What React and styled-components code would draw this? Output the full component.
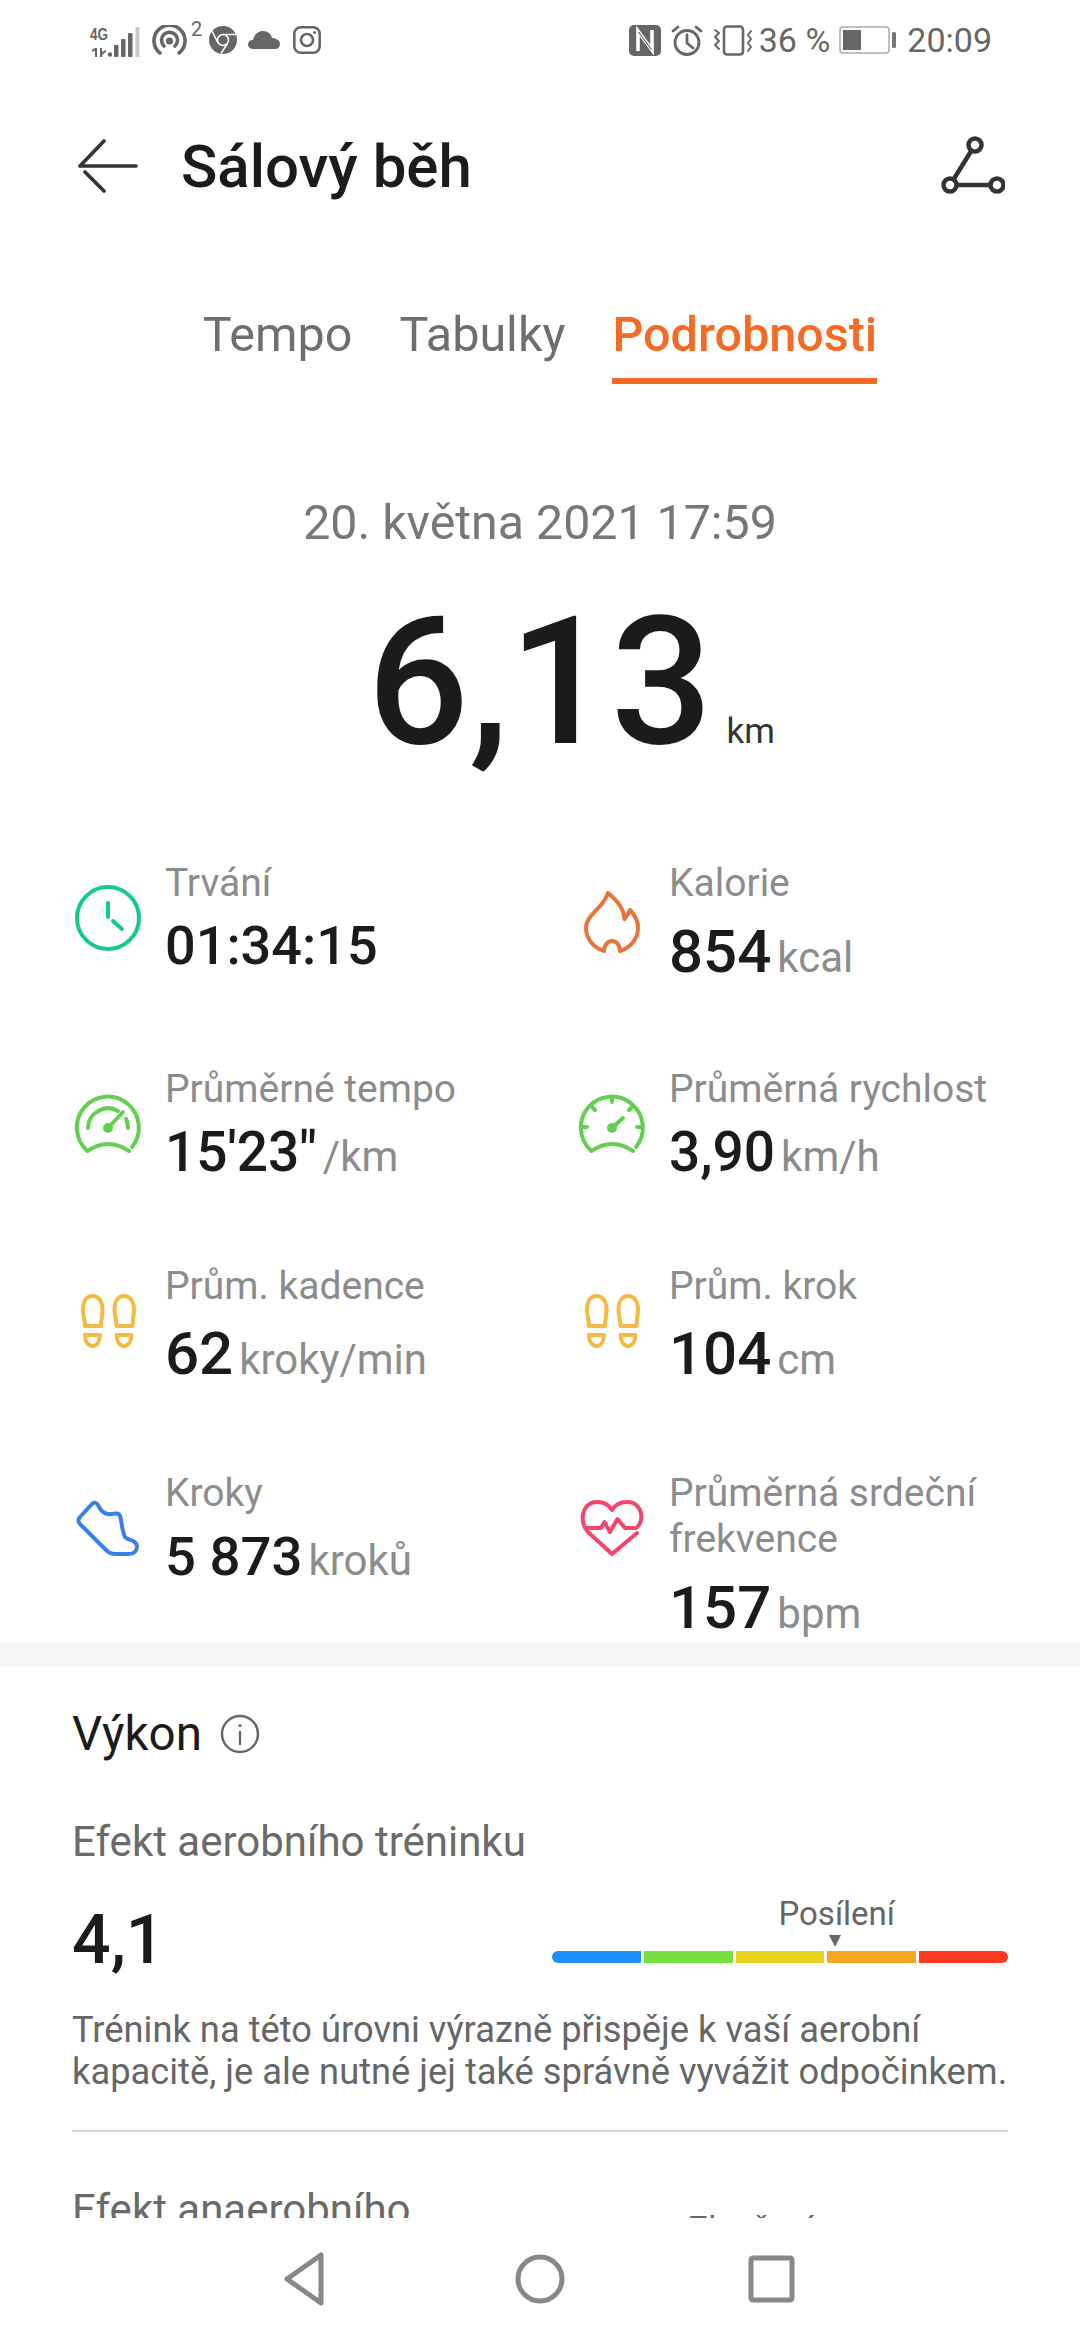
import React from 'react'
import styled, { createGlobalStyle } from 'styled-components'

const GlobalStyle = createGlobalStyle`
  html, body {
    margin: 0;
    padding: 0;
    background: #fff;
    font-family: Roboto, "Noto Sans", sans-serif;
  }
`

const IconSvg = ({ color, children }) => (
  <StatIcon viewBox="0 0 72 72" fill="none" stroke={color} strokeWidth="4" strokeLinecap="round" strokeLinejoin="round">
    {children}
  </StatIcon>
)

const ClockIcon = () => (
  <IconSvg color="#14c991">
    <circle cx="36" cy="36" r="31" />
    <path d="M36 21V35M41 39L50 47" />
  </IconSvg>
)

const gaugeOutline = 'M60 59A31 31 0 1 0 15.5 63Q36 49 57 63'

const PaceIcon = () => (
  <IconSvg color="#62cf50">
    <path d={gaugeOutline} />
    <path d="M16 40A20 20 0 0 1 46 23M54 31Q56 35 56 40" />
    <path d="M36 40L51 24" />
    <circle cx="36" cy="40" r="3" fill="#62cf50" />
  </IconSvg>
)

const SpeedIcon = () => (
  <IconSvg color="#62cf50">
    <path d={gaugeOutline} />
    <path d="M36 9V14M15 18L19 22M57 18L53 22M6 39H11M66 39H61" />
    <path d="M36 40L47 30" />
    <circle cx="36" cy="40" r="3" fill="#62cf50" />
  </IconSvg>
)

const FlameIcon = () => (
  <IconSvg color="#e8743b">
    <path d="M32 11C37 15 48 25 48.5 37C51 34 53 31 54 28C59 33 62 39 62 46C62 57 54 66 44 69C44 64 41 59 36 59C31 59 28 64 28 69C18 66 10 57 10 46C10 32 27 27 32 11Z" />
  </IconSvg>
)

const FootPaths = () => (
  <>
    <path d="M20.5 11C14 11 11 17 11 24C11 31 13 35 13 41H29C29 35 30.5 31 30.5 24C30.5 17 27 11 20.5 11Z" />
    <path d="M13 50H28C28 56 25 61 20.5 61C16 61 13 56 13 50Z" />
  </>
)

const FeetIcon = () => (
  <IconSvg color="#f4bb44">
    <FootPaths />
    <g transform="translate(31.5 0)">
      <FootPaths />
    </g>
  </IconSvg>
)

const ShoeIcon = () => (
  <IconSvg color="#3c7fe8">
    <path d="M8 25L20 12C22 10 24 10 26 13C28 17 30 21 36 22C42 23 46 19 48 24C50 30 50 40 53 45C56 49 64 47 65 54C65 59 62 62 57 62H44C39 62 37 61 33 57L8 32C6 30 6 27 8 25Z" />
  </IconSvg>
)

const HeartIcon = () => (
  <IconSvg color="#f4456b">
    <path d="M61 41L36 62L12 40C3 31 5 10 21 10C28 10 33 13 36 18C39 13 44 10 51 10C67 10 69 30 60 36H49L41.5 27L34 40L28.5 30L25 36H10" />
  </IconSvg>
)

const stats = [
  { icon: ClockIcon, label: 'Trvání', value: '01:34:15', size: 54, height: 206, gap: 0 },
  { icon: FlameIcon, label: 'Kalorie', value: '854', unit: 'kcal', size: 60, height: 206, gap: 6 },
  { icon: PaceIcon, label: 'Průměrné tempo', value: "15'23\"", unit: '/km', size: 55, height: 197, gap: 0 },
  { icon: SpeedIcon, label: 'Průměrná rychlost', value: '3,90', unit: 'km/h', size: 55, height: 197, gap: 0 },
  { icon: FeetIcon, label: 'Prům. kadence', value: '62', unit: 'kroky/min', size: 60, height: 207, gap: 5 },
  { icon: FeetIcon, label: 'Prům. krok', value: '104', unit: 'cm', size: 60, height: 207, gap: 5 },
  { icon: ShoeIcon, label: 'Kroky', value: '5 873', unit: 'kroků', size: 54.5, height: 173, gap: 0 },
  { icon: HeartIcon, label: 'Průměrná srdeční frekvence', value: '157', unit: 'bpm', size: 60, height: 173, gap: 6 },
]

const segments = ['#1e8fff', '#76e040', '#e6d420', '#f5a623', '#ff3a20']

const App = () => {
  return (
    <Screen>
      <GlobalStyle />
      <StatusBar>
        <StatusGroup>
          <svg width="50" height="35" viewBox="0 -4 50 35" fill="#666">
            <text x="0" y="13" fontFamily="Liberation Sans" fontWeight="700" fontSize="17" textLength="18" lengthAdjust="spacingAndGlyphs">4G</text>
            <path d="M2 23L5 21H7V30H5V23.500L2 25ZM10 21H12V25L16 23V25L12 28V30H10Z" />
            <circle cx="20" cy="27.500" r="2.200" />
            <rect x="24" y="18" width="4.500" height="12" rx="1" />
            <rect x="31" y="12" width="4.500" height="18" rx="1" />
            <rect x="38" y="6" width="4.500" height="24" rx="1" />
            <rect x="45.500" y="0" width="4" height="30" fill="#ccc" />
          </svg>
          <svg width="35" height="30" viewBox="0 0 35 30" fill="none" stroke="#666" strokeWidth="3.6" strokeLinecap="round" style={{ marginLeft: 12 }}>
            <path d="M8 28A15.500 15.500 0 1 1 27 28" />
            <path d="M12 21A8 8 0 1 1 23 21" />
            <circle cx="17.500" cy="16" r="1.800" fill="#666" />
          </svg>
          <Superscript>2</Superscript>
          <svg width="28" height="28" viewBox="0 0 28 28" style={{ marginLeft: 7 }}>
            <circle cx="14" cy="14" r="14" fill="#666" />
            <circle cx="14" cy="14" r="5.500" fill="#666" stroke="#fff" strokeWidth="1.500" />
            <path d="M14 8.500H27M9 17L3 5M18.500 17.500L12 27.500" stroke="#fff" strokeWidth="1.500" fill="none" />
          </svg>
          <svg width="32" height="18" viewBox="0 0 32 18" fill="#666" style={{ marginLeft: 11 }}>
            <path d="M6 18C2 18 0 16 0 13.500C0 11 2 9 5 9C6 4 10 0 15 0C20 0 23 3 24 7C28 7 32 9.500 32 13C32 16 30 18 27 18Z" />
          </svg>
          <svg width="28" height="28" viewBox="0 0 28 28" fill="none" stroke="#666" strokeWidth="2.600" style={{ marginLeft: 13 }}>
            <rect x="1.300" y="1.300" width="25.400" height="25.400" rx="6.500" />
            <circle cx="14" cy="14" r="6" />
            <circle cx="21.500" cy="6.500" r="1.500" fill="#666" stroke="none" />
          </svg>
        </StatusGroup>
        <StatusGroup>
          <svg width="32" height="31" viewBox="0 0 32 31">
            <rect width="32" height="31" rx="5" fill="#666" />
            <path d="M9 26V6L23 25V5" fill="none" stroke="#fff" strokeWidth="3.600" />
            <path d="M9.500 7L22.500 24.500" fill="none" stroke="#666" strokeWidth="1.200" />
          </svg>
          <svg width="32" height="31" viewBox="0 0 32 31" fill="none" stroke="#666" strokeWidth="2.800" strokeLinecap="round" style={{ marginLeft: 10 }}>
            <circle cx="16" cy="17.500" r="12" />
            <path d="M16 10V18L22 23M2 6L7 2M30 6L25 2" />
          </svg>
          <svg width="40" height="31" viewBox="0 0 40 31" fill="none" stroke="#666" strokeWidth="2.600" strokeLinecap="round" strokeLinejoin="round" style={{ marginLeft: 10 }}>
            <rect x="11" y="1.500" width="19" height="28" rx="3" />
            <path d="M2 5L6 8L2 12L6 16L2 20L6 24M38 6L35 10L38 14L35 18L38 22L35 26" strokeWidth="2" />
          </svg>
          <StatusText>36 %</StatusText>
          <svg width="58" height="28" viewBox="0 0 58 28" style={{ marginLeft: 9 }}>
            <rect x="1" y="1" width="49" height="26" rx="3" fill="none" stroke="#aaa" strokeWidth="1.500" />
            <rect x="4" y="4" width="18" height="20" fill="#666" />
            <rect x="53" y="6" width="4" height="16" rx="1.500" fill="#777" />
          </svg>
          <StatusText $left={10}>20:09</StatusText>
        </StatusGroup>
      </StatusBar>

      <Header>
        <HeaderLeft>
          <svg width="60" height="54" viewBox="0 0 60 54" fill="none" stroke="#333" strokeWidth="3.600" strokeLinecap="round" strokeLinejoin="round">
            <path d="M58 27H3M26 2L2 27M7 33L26 52" />
          </svg>
          <Title>Sálový běh</Title>
        </HeaderLeft>
        <svg width="68" height="68" viewBox="0 0 68 68" fill="none" stroke="#333" strokeWidth="4.500">
          <circle cx="38" cy="13" r="6.500" />
          <circle cx="13" cy="53" r="6.500" />
          <circle cx="60" cy="53" r="6.500" />
          <path d="M34.500 18.500L16.500 47.500M19.500 53H53.500" />
        </svg>
      </Header>

      <Tabs>
        <Tab>Tempo</Tab>
        <Tab>Tabulky</Tab>
        <Tab $active>Podrobnosti</Tab>
      </Tabs>

      <Scroll>
        <DateLine>20. května 2021 17:59</DateLine>
        <Distance>
          <DistanceValue>6,13</DistanceValue>
          <DistanceUnit>km</DistanceUnit>
        </Distance>

        <StatGrid>
          {stats.map(({ icon: Icon, label, value, unit, size, height, gap }) => (
            <Stat key={label} $height={height}>
              <Icon />
              <StatBody>
                <StatLabel>{label}</StatLabel>
                <StatValue $gap={gap} $size={size}>
                  {value}
                  {unit && <StatUnit>{unit}</StatUnit>}
                </StatValue>
              </StatBody>
            </Stat>
          ))}
        </StatGrid>

        <Band />

        <Section>
          <SectionTitle>
            Výkon
            <svg width="40" height="40" viewBox="0 0 40 40" fill="none" stroke="#666" strokeWidth="2.400" strokeLinecap="round">
              <circle cx="20" cy="20" r="18" />
              <path d="M20 18V30" />
              <circle cx="20" cy="11.500" r="1.600" fill="#666" stroke="none" />
            </svg>
          </SectionTitle>
          <EffectName $top={57}>Efekt aerobního tréninku</EffectName>
          <EffectRow>
            <EffectValue>4,1</EffectValue>
            <Scale>
              <ScaleLabel>Posílení</ScaleLabel>
              <ScaleMarker />
              <ScaleBar>
                {segments.map(color => (
                  <ScaleSegment key={color} $color={color} />
                ))}
              </ScaleBar>
            </Scale>
          </EffectRow>
          <EffectText>
            Trénink na této úrovni výrazně přispěje k vaší aerobní kapacitě, je ale nutné jej také správně vyvážit odpočinkem.
          </EffectText>
          <Rule />
          <NextRow>
            <EffectName>Efekt anaerobního</EffectName>
            <NextLabel>Zlepšení</NextLabel>
          </NextRow>
        </Section>
      </Scroll>

      <NavBar>
        <svg width="60" height="56" viewBox="0 0 60 56" fill="none" stroke="#888" strokeWidth="5" strokeLinejoin="round">
          <path d="M43 4V52L9 28Z" />
        </svg>
        <svg width="60" height="56" viewBox="0 0 60 56" fill="none" stroke="#888" strokeWidth="5">
          <circle cx="30" cy="28" r="22" />
        </svg>
        <svg width="60" height="56" viewBox="0 0 60 56" fill="none" stroke="#888" strokeWidth="5" strokeLinejoin="round">
          <rect x="9" y="7" width="41" height="42" rx="2" />
        </svg>
      </NavBar>
    </Screen>
  )
}

export default App

const Screen = styled.div`
  width: 1080px;
  height: 2340px;
  display: flex;
  flex-direction: column;
  overflow: hidden;
  background: #fff;
`

const StatusBar = styled.div`
  height: 80px;
  flex: none;
  padding: 0 88px 0 90px;
  display: flex;
  justify-content: space-between;
  align-items: center;
`

const StatusGroup = styled.div`
  display: flex;
  align-items: center;
`

const Superscript = styled.span`
  font-size: 20px;
  color: #666;
  margin: -22px 0 0 4px;
`

const StatusText = styled.span`
  font-size: 34px;
  color: #666;
  margin-left: ${p => p.$left || 6}px;
`

const Header = styled.div`
  height: 172px;
  flex: none;
  padding: 0 75px 0 78px;
  display: flex;
  justify-content: space-between;
  align-items: center;
`

const HeaderLeft = styled.div`
  display: flex;
  align-items: center;
  gap: 43px;
`

const Title = styled.h1`
  margin: 0;
  font-size: 60px;
  font-weight: 500;
  color: #1b1b1b;
`

const Tabs = styled.div`
  flex: none;
  height: 132px;
  display: flex;
  justify-content: center;
  gap: 47px;
`

const Tab = styled.div`
  height: 132px;
  box-sizing: border-box;
  padding-top: 55px;
  line-height: 56px;
  font-size: 48.5px;
  font-weight: ${p => (p.$active ? 500 : 400)};
  color: ${p => (p.$active ? '#f56b24' : '#6e6e6e')};
  border-bottom: 6px solid ${p => (p.$active ? '#f56b24' : 'transparent')};
`

const Scroll = styled.div`
  flex: 1;
  min-height: 0;
  overflow: hidden;
`

const DateLine = styled.div`
  margin-top: 112px;
  text-align: center;
  font-size: 48.3px;
  line-height: 54px;
  color: #777;
`

const Distance = styled.div`
  margin-top: 24px;
  padding-left: 62px;
  display: flex;
  justify-content: center;
  align-items: baseline;
  gap: 14px;
  height: 286px;
`

const DistanceValue = styled.span`
  font-size: 179px;
  font-weight: 500;
  line-height: 216px;
  color: #1b1b1b;
`

const DistanceUnit = styled.span`
  font-size: 35px;
  color: #333;
`

const StatGrid = styled.div`
  padding: 0 0 0 72px;
  display: grid;
  grid-template-columns: 504px 504px;
  align-items: start;
`

const Stat = styled.div`
  display: flex;
  gap: 21px;
  min-height: ${p => p.$height}px;
  align-self: start;
`

const StatIcon = styled.svg`
  width: 72px;
  height: 72px;
  flex: none;
  margin-top: 22px;
`

const StatBody = styled.div`
  min-width: 0;
`

const StatLabel = styled.div`
  font-size: 39px;
  line-height: 46px;
  color: #8c8c8c;
  width: 340px;
`

const StatValue = styled.div`
  margin-top: ${p => 8 + p.$gap}px;
  font-size: ${p => p.$size}px;
  font-weight: 500;
  line-height: 64px;
  color: #1b1b1b;
`

const StatUnit = styled.span`
  margin-left: 6px;
  font-size: 42px;
  font-weight: 400;
  line-height: 1;
  color: #8c8c8c;
`

const Band = styled.div`
  height: 24px;
  background: #f7f7f7;
`

const Section = styled.div`
  padding: 0 72px;
`

const SectionTitle = styled.div`
  margin-top: 40px;
  display: flex;
  align-items: center;
  gap: 18px;
  font-size: 47.5px;
  line-height: 54px;
  color: #1b1b1b;
`

const EffectName = styled.div`
  margin-top: ${p => p.$top || 0}px;
  font-size: 42px;
  line-height: 48px;
  color: #6a6a6a;
`

const EffectRow = styled.div`
  margin-top: 30px;
  display: flex;
  justify-content: space-between;
  align-items: flex-end;
`

const EffectValue = styled.div`
  font-size: 68px;
  font-weight: 500;
  line-height: 78px;
  color: #1b1b1b;
`

const Scale = styled.div`
  width: 456px;
  margin-bottom: 16px;
  display: flex;
  flex-direction: column;
  align-items: center;
`

const ScaleLabel = styled.div`
  align-self: flex-end;
  margin-right: 113px;
  font-size: 33px;
  line-height: 36px;
  color: #666;
`

const ScaleMarker = styled.div`
  align-self: flex-start;
  margin: 3px 0 4px 277px;
  width: 0;
  height: 0;
  border-left: 6px solid transparent;
  border-right: 6px solid transparent;
  border-top: 12px solid #666;
`

const ScaleBar = styled.div`
  width: 100%;
  height: 12px;
  display: flex;
  gap: 3px;
  border-radius: 6px;
  overflow: hidden;
`

const ScaleSegment = styled.div`
  flex: 1;
  background: ${p => p.$color};
`

const EffectText = styled.p`
  margin: 30px 0 0;
  font-size: 36.3px;
  line-height: 42px;
  color: #666;
`

const Rule = styled.div`
  margin-top: 37px;
  height: 2px;
  background: #d8d8d8;
`

const NextRow = styled.div`
  margin-top: 54px;
  display: flex;
  align-items: flex-start;
`

const NextLabel = styled.div`
  margin: 24px 0 0 278px;
  font-size: 33px;
  line-height: 38px;
  color: #666;
`

const NavBar = styled.div`
  height: 122px;
  flex: none;
  background: #fff;
  display: flex;
  justify-content: center;
  align-items: center;
  gap: 172px;
`
